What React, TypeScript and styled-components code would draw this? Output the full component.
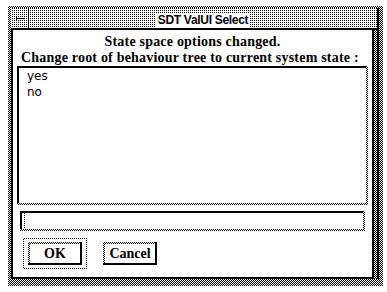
import React from 'react';
import styled, { createGlobalStyle, css } from 'styled-components';

const GlobalStyle = createGlobalStyle`
    html, body {
        margin: 0;
        padding: 0;
        background: #fff;
    }
`;

// 1-bit dither patterns of the old Motif look
const dither50 = css`
    background: repeating-conic-gradient(#000 0% 25%, #fff 0% 50%) 0 0 / 2px 2px;
`;

const dither25 = css`
    background: repeating-conic-gradient(#000 0% 25%, #fff 0% 100%) 0 0 / 2px 2px;
`;

const App = () => {
    const options = ['yes', 'no'];
    const buttons = [
        { label: 'OK', focused: true },
        { label: 'Cancel', focused: false },
    ];

    return (
        <>
            <GlobalStyle />
            <Window>
                <Frame>
                    <TitleBar>
                        <MenuButton>
                            <svg width="17" height="20" viewBox="0 0 17 20">
                                <path d="M5 10.5h8M5.5 9v3" stroke="#000" strokeWidth="1" fill="none" />
                            </svg>
                        </MenuButton>
                        <TitleArea>
                            <TitleLabel>SDT ValUI Select</TitleLabel>
                        </TitleArea>
                    </TitleBar>
                    <Body>
                        <Message>State space options changed.</Message>
                        <Message $left>Change root of behaviour tree to current system state :</Message>
                        <Sunken $inset={4} $height={139}>
                            <ListArea>
                                {options.map((o) => (
                                    <ListItem key={o}>{o}</ListItem>
                                ))}
                            </ListArea>
                        </Sunken>
                        <Sunken $inset={7} $height={20} $gap={6}>
                            <FieldArea>
                                <Cursor />
                            </FieldArea>
                        </Sunken>
                        <ButtonRow>
                            {buttons.map((b) => (
                                <FocusRing key={b.label} $focused={b.focused}>
                                    <RingGap>
                                        <PushButton>
                                            <Face>{b.label}</Face>
                                        </PushButton>
                                    </RingGap>
                                </FocusRing>
                            ))}
                        </ButtonRow>
                    </Body>
                </Frame>
            </Window>
        </>
    );
};

export default App;

const Window = styled.div`
    ${dither50};
    box-sizing: border-box;
    width: 375px;
    height: 280px;
    margin: 6px 0 0 8px;
    padding: 2px 4px 7px 3px;
    display: flex;
`;

const Frame = styled.div`
    ${dither50};
    flex: 1;
    display: flex;
    flex-direction: column;
    border-right: 2px solid #000;
`;

const TitleBar = styled.div`
    ${dither25};
    height: 20px;
    display: flex;
    border-bottom: 2px solid #000;
`;

const MenuButton = styled.div`
    width: 17px;
    border-right: 1px solid #000;
    display: flex;
    align-items: center;
    justify-content: center;
    svg {
        display: block;
    }
`;

const TitleArea = styled.div`
    flex: 1;
    display: flex;
    align-items: center;
    justify-content: center;
`;

const TitleLabel = styled.div`
    background: #fff;
    height: 15px;
    margin-top: 4px;
    padding: 0 2px;
    font-family: "Liberation Sans", Arial, sans-serif;
    font-weight: bold;
    font-size: 12px;
    letter-spacing: -0.3px;
    line-height: 15px;
    color: #000;
`;

const Body = styled.div`
    flex: 1;
    margin-right: 3px;
    background: #fff;
    border: 2px solid #000;
    border-top: none;
    padding: 4px 0 8px 0;
    display: flex;
    flex-direction: column;
`;

const Message = styled.div<{ $left?: boolean }>`
    font-family: "Liberation Serif", "Times New Roman", serif;
    font-weight: bold;
    font-size: 14px;
    letter-spacing: 0.2px;
    line-height: 16px;
    height: 16px;
    white-space: nowrap;
    color: #000;
    text-align: ${(p) => (p.$left ? 'left' : 'center')};
    padding-left: ${(p) => (p.$left ? '8px' : '0')};
`;

// sunken well: black top/left shadow, dithered bottom/right
const Sunken = styled.div<{ $inset: number; $height: number; $gap?: number }>`
    ${dither50};
    box-sizing: border-box;
    height: ${(p) => p.$height}px;
    margin: ${(p) => p.$gap ?? 0}px ${(p) => p.$inset}px 0;
    padding: 0 2px 2px 0;
    display: flex;
`;

const ListArea = styled.div`
    flex: 1;
    background: #fff;
    border-top: 2px solid #000;
    border-left: 2px solid #000;
    padding: 0 0 0 8px;
`;

const ListItem = styled.div`
    font-family: "DejaVu Sans", sans-serif;
    font-size: 12px;
    line-height: 16px;
    color: #000;
`;

const FieldArea = styled.div`
    flex: 1;
    background: #fff;
    border-top: 2px solid #000;
    border-left: 2px solid #000;
    padding-left: 2px;
    display: flex;
    align-items: stretch;
`;

const Cursor = styled.div`
    width: 1px;
    background: repeating-linear-gradient(#000 0 1px, #fff 1px 2px);
`;

const ButtonRow = styled.div`
    display: flex;
    gap: 11px;
    margin: 7px 0 0 10px;
`;

// dotted keyboard-focus rectangle round the default button
const FocusRing = styled.div<{ $focused?: boolean }>`
    ${(p) => (p.$focused ? dither50 : 'background: #fff;')};
    padding: 1px;
    display: flex;
`;

const RingGap = styled.div`
    background: #fff;
    padding: 3px 4px;
    display: flex;
`;

// raised button: dithered top/left, black bottom/right
const PushButton = styled.div`
    ${dither50};
    box-sizing: border-box;
    width: 54px;
    height: 23px;
    padding: 2px 0 0 2px;
    border-right: 2px solid #000;
    border-bottom: 2px solid #000;
    display: flex;
`;

const Face = styled.div`
    flex: 1;
    background: #fff;
    display: flex;
    align-items: center;
    justify-content: center;
    font-family: "Liberation Serif", "Times New Roman", serif;
    font-weight: bold;
    font-size: 14px;
    color: #000;
`;
